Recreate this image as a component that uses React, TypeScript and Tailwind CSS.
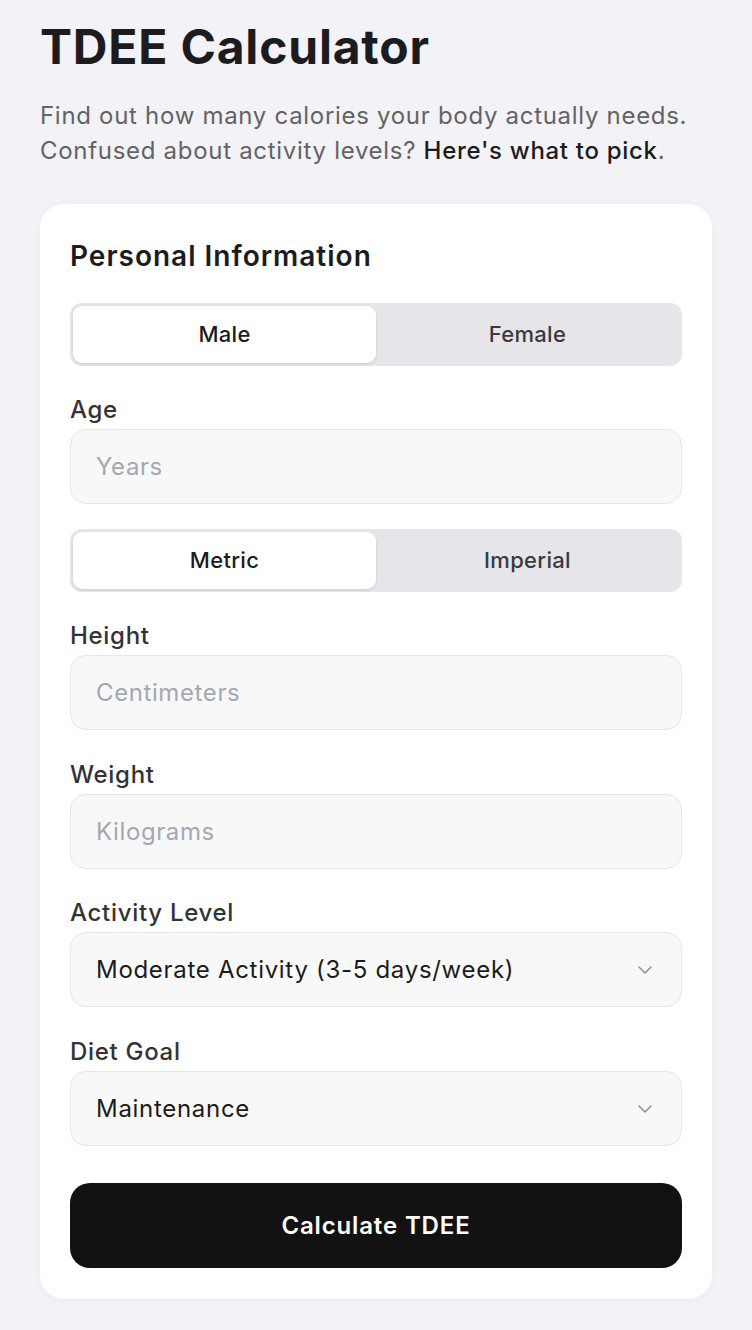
import React from "react";

function Segmented({ left, right }: { left: string; right: string }) {
  return (
    <div className="flex h-[63px] rounded-[12px] bg-[#e5e5ea] p-[3px]">
      <div className="flex flex-1 items-center justify-center rounded-[9px] bg-white text-[22px] font-medium tracking-[0.3px] text-[#1c1c1e] shadow-[0_1px_3px_rgba(0,0,0,0.12)]">
        {left}
      </div>
      <div className="flex flex-1 items-center justify-center text-[22px] font-medium tracking-[0.3px] text-[#3a3a3c]">
        {right}
      </div>
    </div>
  );
}

function Label({ children }: { children: React.ReactNode }) {
  return (
    <div className="mb-[5px] pt-[5px] text-[24px] font-medium leading-[28px] tracking-[0.7px] text-[#333336]">
      {children}
    </div>
  );
}

function Field({ label, placeholder }: { label: string; placeholder: string }) {
  return (
    <div>
      <Label>{label}</Label>
      <div className="flex h-[75px] items-center rounded-[16px] border border-[#e5e5ea] bg-[#f8f8f8] px-[25px] text-[24px] tracking-[0.6px] text-[#a3a8b3]">
        {placeholder}
      </div>
    </div>
  );
}

function Select({ label, value }: { label: string; value: string }) {
  return (
    <div>
      <Label>{label}</Label>
      <div className="flex h-[75px] items-center justify-between rounded-[16px] border border-[#e5e5ea] bg-[#f8f8f8] pl-[25px] pr-[29px] text-[24px] tracking-[0.7px] text-[#1c1c1e]">
        <span>{value}</span>
        <svg width="14" height="8" viewBox="0 0 14 8" fill="none">
          <path d="M1 1l6 6 6-6" stroke="#8e8e93" strokeWidth="1.5" strokeLinecap="round" strokeLinejoin="round" />
        </svg>
      </div>
    </div>
  );
}

export default function App() {
  return (
    <div
      className="min-h-[1330px] bg-[#f2f2f7] px-[40px] pt-[18px] pb-[32px]"
      style={{ fontFamily: "Inter, 'Noto Sans', sans-serif" }}
    >
      <h1 className="text-[48px] font-bold leading-[58px] tracking-[0.8px] text-[#1c1c1e]">
        TDEE Calculator
      </h1>
      <p className="mt-[22px] text-[24px] leading-[35px] tracking-[0.7px] text-[#636366]">
        Find out how many calories your body actually needs. Confused about activity levels?{" "}
        <span className="font-medium text-[#1c1c1e]">Here's what to pick</span>.
      </p>
      <div className="mt-[36px] rounded-[24px] bg-white px-[30px] pt-[30px] pb-[31px] shadow-[0_2px_8px_rgba(0,0,0,0.04)]">
        <div className="flex flex-col gap-[25px]">
          <h2 className="text-[28px] font-semibold leading-[44px] tracking-[1px] text-[#1c1c1e]">
            Personal Information
          </h2>
          <Segmented left="Male" right="Female" />
          <Field label="Age" placeholder="Years" />
          <Segmented left="Metric" right="Imperial" />
          <Field label="Height" placeholder="Centimeters" />
          <div className="mt-[1px]">
            <Field label="Weight" placeholder="Kilograms" />
          </div>
          <Select label="Activity Level" value="Moderate Activity (3-5 days/week)" />
          <div className="mt-[1px]">
            <Select label="Diet Goal" value="Maintenance" />
          </div>
          <button className="mt-[12px] flex h-[85px] items-center justify-center rounded-[20px] bg-[#121212] text-[24px] font-semibold tracking-[0.85px] text-white">
            Calculate TDEE
          </button>
        </div>
      </div>
    </div>
  );
}
